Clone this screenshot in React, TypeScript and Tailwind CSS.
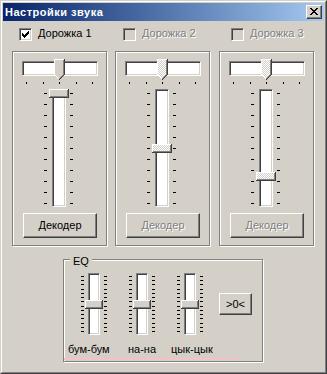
import React, { useId } from "react";

type PixelRect = [number, number, number, number];

const SUNKEN =
  "border border-t-[#808080] border-l-[#808080] border-r-white border-b-white shadow-[inset_1px_1px_0_#404040,inset_-1px_-1px_0_#d4d0c8]";
const RAISED =
  "border border-t-white border-l-white border-r-[#404040] border-b-[#404040] shadow-[inset_-1px_-1px_0_#808080]";
const ETCHED = "border border-[#808080] shadow-[inset_1px_1px_0_#fff,1px_1px_0_#fff]";
const DISABLED_TEXT = "text-[#808080] [text-shadow:1px_1px_0_#ffffff]";

function Px({ rects, fill }: { rects: PixelRect[]; fill: string }) {
  return (
    <>
      {rects.map(([x, y, w, h], i) => (
        <rect key={i} x={x} y={y} width={w} height={h} fill={fill} />
      ))}
    </>
  );
}

function useSafeId() {
  return "p" + useId().replace(/[^a-zA-Z0-9]/g, "");
}

function Dither({ id }: { id: string }) {
  return (
    <defs>
      <pattern id={id} width="2" height="2" patternUnits="userSpaceOnUse">
        <rect width="2" height="2" fill="#d4d0c8" />
        <rect width="1" height="1" fill="#ffffff" />
        <rect x="1" y="1" width="1" height="1" fill="#ffffff" />
      </pattern>
    </defs>
  );
}

function HThumb({ dither }: { dither: boolean }) {
  const id = useSafeId();
  const fill = dither ? `url(#${id})` : "#d4d0c8";
  const rows: [number, number][] = [];
  for (let y = 0; y <= 15; y++) rows.push([0, 10]);
  rows.push([1, 9], [2, 8], [3, 7], [4, 6], [5, 5]);
  return (
    <svg
      width="11"
      height="21"
      viewBox="0 0 11 21"
      shapeRendering="crispEdges"
      className="absolute left-[32px] top-0"
    >
      {dither && <Dither id={id} />}
      {rows.map(([a, b], y) => (
        <rect key={y} x={a} y={y} width={b - a + 1} height={1} fill={fill} />
      ))}
      <Px
        fill="#ffffff"
        rects={[
          [0, 0, 10, 1],
          [0, 0, 1, 16],
          [1, 16, 1, 1],
          [2, 17, 1, 1],
          [3, 18, 1, 1],
          [4, 19, 1, 1],
        ]}
      />
      <Px
        fill="#808080"
        rects={[
          [9, 1, 1, 15],
          [8, 16, 1, 1],
          [7, 17, 1, 1],
          [6, 18, 1, 1],
          [5, 19, 1, 1],
        ]}
      />
      <Px
        fill="#404040"
        rects={[
          [10, 0, 1, 16],
          [9, 16, 1, 1],
          [8, 17, 1, 1],
          [7, 18, 1, 1],
          [6, 19, 1, 1],
          [5, 20, 1, 1],
        ]}
      />
    </svg>
  );
}

function VThumb({
  w,
  h,
  dither,
  className,
}: {
  w: number;
  h: number;
  dither: boolean;
  className: string;
}) {
  const id = useSafeId();
  const fill = dither ? `url(#${id})` : "#d4d0c8";
  return (
    <svg
      width={w}
      height={h}
      viewBox={`0 0 ${w} ${h}`}
      shapeRendering="crispEdges"
      className={`absolute ${className}`}
    >
      {dither && <Dither id={id} />}
      <rect width={w} height={h} fill={fill} />
      <Px
        fill="#ffffff"
        rects={[
          [0, 0, w - 1, 1],
          [0, 0, 1, h - 1],
        ]}
      />
      <Px
        fill="#808080"
        rects={[
          [w - 2, 1, 1, h - 2],
          [1, h - 2, w - 2, 1],
        ]}
      />
      <Px
        fill="#404040"
        rects={[
          [w - 1, 0, 1, h],
          [0, h - 1, w, 1],
        ]}
      />
    </svg>
  );
}

function Checkbox({ checked, enabled }: { checked: boolean; enabled: boolean }) {
  return (
    <div
      className={`w-[13px] h-[13px] shrink-0 flex items-center justify-center ${SUNKEN} ${
        enabled ? "bg-white" : "bg-[#d4d0c8]"
      }`}
    >
      {checked && (
        <svg width="7" height="7" viewBox="0 0 7 7" shapeRendering="crispEdges">
          <Px
            fill="#000000"
            rects={[
              [6, 0, 1, 1],
              [5, 1, 2, 1],
              [0, 2, 1, 1],
              [4, 2, 3, 1],
              [0, 3, 2, 1],
              [3, 3, 3, 1],
              [0, 4, 5, 1],
              [1, 5, 3, 1],
              [2, 6, 1, 1],
            ]}
          />
        </svg>
      )}
    </div>
  );
}

function Button({
  children,
  disabled,
  className,
}: {
  children: React.ReactNode;
  disabled?: boolean;
  className: string;
}) {
  return (
    <div
      className={`bg-[#d4d0c8] flex items-center justify-center ${RAISED} ${className}`}
    >
      <span className={disabled ? DISABLED_TEXT : "text-black"}>{children}</span>
    </div>
  );
}

const PANEL_TICKS = Array.from({ length: 11 }, (_, i) => 4 + i * 11);
const EQ_TICKS = Array.from({ length: 14 }, (_, i) => Math.round(3 + (i * 55) / 13));
const H_TICKS = [4, 21, 37, 54, 70];

function Panel({ enabled, thumbTop }: { enabled: boolean; thumbTop: string }) {
  return (
    <div className={`w-[95px] h-[195px] flex flex-col shrink-0 ${ETCHED}`}>
      <div className="relative ml-[9px] mt-[7px] w-[76px] h-[26px]">
        <div className={`mt-[2px] w-[76px] h-[15px] bg-white ${SUNKEN}`} />
        <HThumb dither={!enabled} />
        <svg
          className="absolute left-0 top-[23px]"
          width="76"
          height="2"
          shapeRendering="crispEdges"
        >
          {H_TICKS.map((x) => (
            <rect key={x} x={x} y={0} width={1} height={2} fill="#000" />
          ))}
        </svg>
      </div>
      <div className="relative ml-[31px] mt-[4px] w-[29px] h-[118px]">
        <div className={`ml-[8px] w-[14px] h-[118px] bg-white ${SUNKEN}`} />
        <svg
          className="absolute left-0 top-0"
          width="29"
          height="118"
          shapeRendering="crispEdges"
        >
          {PANEL_TICKS.map((y) => (
            <g key={y}>
              <rect x={0} y={y} width={3} height={1} fill="#000" />
              <rect x={26} y={y} width={3} height={1} fill="#000" />
            </g>
          ))}
        </svg>
        <VThumb w={20} h={9} dither={!enabled} className={`left-[5px] ${thumbTop}`} />
      </div>
      <Button disabled={!enabled} className="ml-[10px] mt-[6px] w-[74px] h-[25px]">
        Декодер
      </Button>
    </div>
  );
}

function EqSlider({ className }: { className: string }) {
  return (
    <div className={`relative w-[26px] h-[62px] shrink-0 ${className}`}>
      <div className={`ml-[7px] w-[12px] h-[62px] bg-white ${SUNKEN}`} />
      <svg
        className="absolute left-0 top-0"
        width="26"
        height="62"
        shapeRendering="crispEdges"
      >
        {EQ_TICKS.map((y) => (
          <g key={y}>
            <rect x={0} y={y} width={3} height={1} fill="#000" />
            <rect x={23} y={y} width={3} height={1} fill="#000" />
          </g>
        ))}
      </svg>
      <VThumb w={18} h={9} dither={false} className="left-[4px] top-[27px]" />
    </div>
  );
}

export default function App() {
  return (
    <div className="w-[327px] h-[374px] bg-[#d4d0c8] border border-t-[#d4d0c8] border-l-[#d4d0c8] border-r-[#404040] border-b-[#404040] text-[11px] leading-[13px] text-black font-['Liberation_Sans',Arial,sans-serif] overflow-hidden">
      <div className="h-full border border-t-white border-l-white border-r-[#808080] border-b-[#808080] p-px flex flex-col">
        {/* title bar */}
        <div className="h-[18px] shrink-0 flex items-center bg-linear-to-r from-[#0a246a] to-[#a6caf0] pl-[2px] pr-[2px]">
          <span className="flex-1 text-white font-bold tracking-[0.5px] leading-[18px] whitespace-nowrap">
            Настройки звука
          </span>
          <div className={`w-[16px] h-[14px] bg-[#d4d0c8] flex items-start pl-[3px] pt-[2px] ${RAISED}`}>
            <svg width="8" height="7" viewBox="0 0 8 7" shapeRendering="crispEdges">
              <Px
                fill="#000000"
                rects={[
                  [0, 0, 2, 1],
                  [6, 0, 2, 1],
                  [1, 1, 2, 1],
                  [5, 1, 2, 1],
                  [2, 2, 4, 1],
                  [3, 3, 2, 1],
                  [2, 4, 4, 1],
                  [1, 5, 2, 1],
                  [5, 5, 2, 1],
                  [0, 6, 2, 1],
                  [6, 6, 2, 1],
                ]}
              />
            </svg>
          </div>
        </div>

        {/* track checkboxes */}
        <div className="mt-[7px] h-[13px] flex items-center">
          <div className="ml-[16px] w-[104px] flex items-center gap-[6px]">
            <Checkbox checked enabled />
            <span className="mb-[2px] whitespace-nowrap">Дорожка 1</span>
          </div>
          <div className="w-[108px] flex items-center gap-[6px]">
            <Checkbox checked={false} enabled={false} />
            <span className={`mb-[2px] whitespace-nowrap ${DISABLED_TEXT}`}>Дорожка 2</span>
          </div>
          <div className="flex items-center gap-[6px]">
            <Checkbox checked={false} enabled={false} />
            <span className={`mb-[2px] w-[55px] overflow-hidden whitespace-nowrap ${DISABLED_TEXT}`}>
              Дорожка 3
            </span>
          </div>
        </div>

        {/* panels */}
        <div className="mt-[10px] flex">
          <div className="ml-[9px]">
            <Panel enabled thumbTop="top-[0px]" />
          </div>
          <div className="ml-[8px]">
            <Panel enabled={false} thumbTop="top-[55px]" />
          </div>
          <div className="ml-[9px]">
            <Panel enabled={false} thumbTop="top-[83px]" />
          </div>
        </div>

        {/* EQ group */}
        <div className={`relative ml-[60px] mt-[13px] w-[200px] h-[103px] shrink-0 ${ETCHED}`}>
          <span className="absolute left-[6px] top-[-5px] px-[3px] bg-[#d4d0c8] leading-[13px]">
            EQ
          </span>
          <div className="mt-[13px] flex items-start">
            <EqSlider className="ml-[17px]" />
            <EqSlider className="ml-[22px]" />
            <EqSlider className="ml-[22px]" />
            <Button className="ml-[16px] mt-[20px] w-[33px] h-[22px]">&gt;0&lt;</Button>
          </div>
          <div className="mt-[8px] flex whitespace-nowrap">
            <span className="ml-[4px] w-[60px]">бум-бум</span>
            <span className="w-[43px]">на-на</span>
            <span>цык-цык</span>
          </div>
          <div className="mt-[2px] w-[174px] h-[2px] bg-[#f4c2c2] rounded-r-full" />
        </div>
      </div>
    </div>
  );
}
